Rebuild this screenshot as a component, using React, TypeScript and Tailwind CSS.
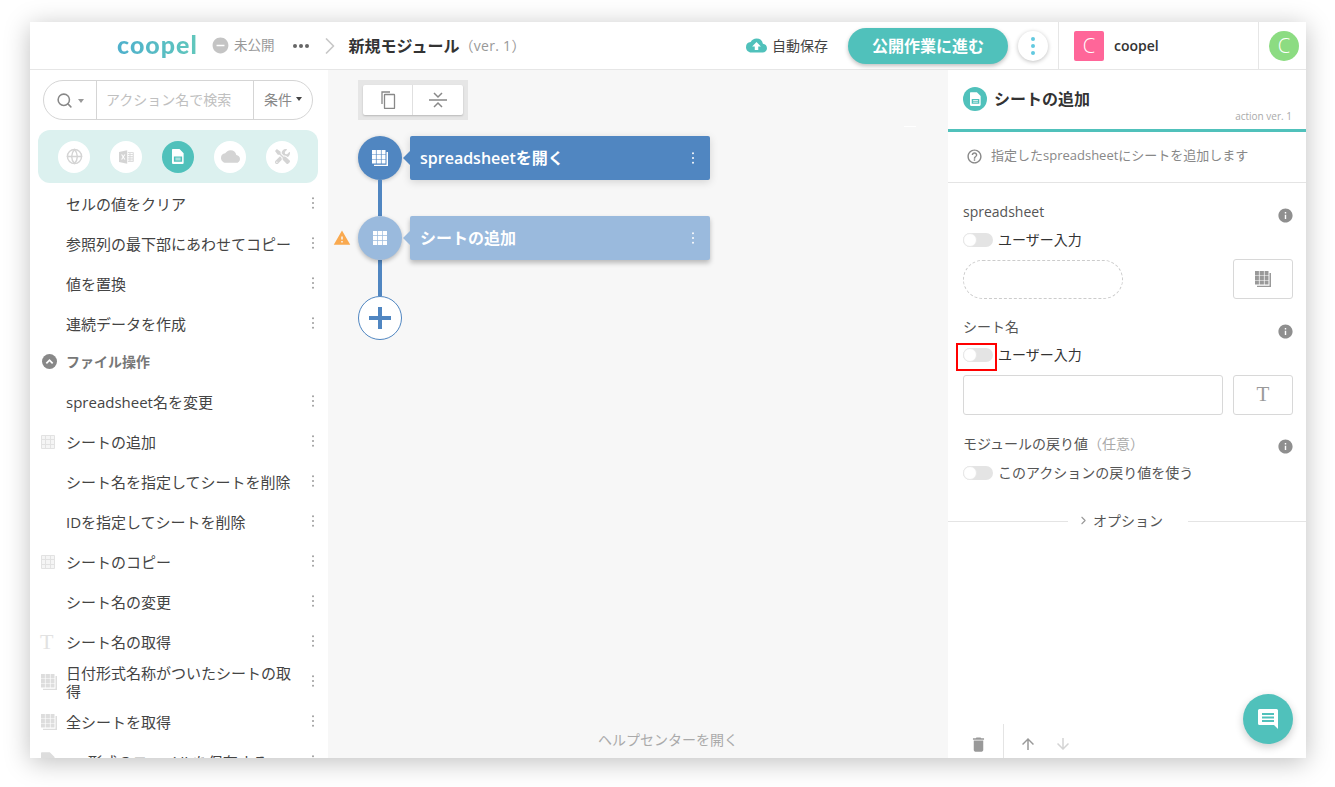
import { ChevronRight, Globe, Search } from "lucide-react";
import { FaTools } from "react-icons/fa";
import {
  MdArrowDownward,
  MdArrowUpward,
  MdCloud,
  MdCloudUpload,
  MdDelete,
  MdHelpOutline,
  MdInfo,
  MdRemoveCircle,
  MdWarning,
} from "react-icons/md";

function Grid({ className = "" }: { className?: string }) {
  return (
    <svg viewBox="0 0 14 14" className={className} fill="currentColor">
      <path d="M0 0h4.200v4.200H0zM4.900 0h4.200v4.200H4.900zM9.800 0H14v4.200H9.800zM0 4.900h4.200v4.200H0zM4.900 4.900h4.200v4.200H4.900zM9.800 4.900H14v4.200H9.800zM0 9.800h4.200V14H0zM4.900 9.800h4.200V14H4.900zM9.800 9.800H14V14H9.800z" />
    </svg>
  );
}

function ListGrid() {
  return (
    <svg viewBox="0 0 14 14" className="absolute left-[11px] top-[13px] h-[14px] w-[14px]" fill="#f5f5f5" stroke="#e2e2e2">
      <path d="M.5.500h13v13H.5zM4.500.500v13M9.500.500v13M.5 4.500h13M.5 9.500h13" />
    </svg>
  );
}

function GridStack({ className = "" }: { className?: string }) {
  return (
    <svg viewBox="0 0 16 16" className={className} fill="currentColor">
      <path d="M0 0h3.900v3.900H0zM4.600 0h4.300v3.900H4.600zM9.600 0h3.900v3.900H9.600zM0 4.600h3.900v4.300H0zM4.600 4.600h4.300v4.300H4.600zM9.600 4.600h3.900v4.300H9.600zM0 9.600h3.900v3.900H0zM4.600 9.600h4.300v3.900H4.600zM9.600 9.600h3.900v3.900H9.600z" />
      <path d="M14.500 2H16v14H2v-1.200h12.500z" />
    </svg>
  );
}

function SheetDoc({ className = "" }: { className?: string }) {
  return (
    <svg viewBox="0 0 16 20" className={className} fill="currentColor">
      <path
        fillRule="evenodd"
        d="M1 0h9l5.500 5.500V18.500a1.500 1.500 0 0 1-1.500 1.500H1.500A1.500 1.500 0 0 1 0 18.500V1a1 1 0 0 1 1-1zM2.500 10v7h11v-7zm2 1.500h7v1h-7zm0 2.500h7v1h-7z"
      />
    </svg>
  );
}

function ExcelIcon({ className = "" }: { className?: string }) {
  return (
    <svg viewBox="0 0 22 20" className={className} fill="currentColor">
      <path
        fillRule="evenodd"
        d="M0 2.500 12 0v20L0 17.500zM3 6.500l2.300 3.500L3 13.500h1.900L6.200 11.200l1.300 2.300h1.900L7.100 10l2.300-3.500H7.500L6.200 8.800 4.900 6.500z"
      />
      <path d="M13 3h8.500v14H13v-1.500h2.500v-2H13v-1.200h2.500v-2H13V9h2.500V7H13V5.800h2.500V4.300H13zm3.700 1.300v1.500h3.500V4.300zm0 2.700v2h3.500V7zm0 3.300v2h3.500v-2zm0 3.200v2h3.500v-2z" />
    </svg>
  );
}

function Dots({ className = "" }: { className?: string }) {
  return (
    <svg viewBox="0 0 4 14" className={className} fill="currentColor">
      <rect x="1" y="0.500" width="2" height="2" />
      <rect x="1" y="6" width="2" height="2" />
      <rect x="1" y="11.500" width="2" height="2" />
    </svg>
  );
}

function Toggle() {
  return (
    <span className="relative block h-[14px] w-[30px] shrink-0 rounded-full bg-[#e4e4e4]">
      <span className="absolute left-0 top-0 h-[14px] w-[14px] rounded-full border border-[#e8e8e8] bg-white" />
    </span>
  );
}

function Info() {
  return <MdInfo className="-mr-px text-[17px] text-[#8f8f8f]" />;
}

const listTop = ["セルの値をクリア", "参照列の最下部にあわせてコピー", "値を置換", "連続データを作成"];

type Row = { label: string; icon?: "grid" | "text" | "stack" | "doc" };

const listBottom: Row[] = [
  { label: "spreadsheet名を変更" },
  { label: "シートの追加", icon: "grid" },
  { label: "シート名を指定してシートを削除" },
  { label: "IDを指定してシートを削除" },
  { label: "シートのコピー", icon: "grid" },
  { label: "シート名の変更" },
  { label: "シート名の取得", icon: "text" },
  { label: "日付形式名称がついたシートの取得", icon: "stack" },
  { label: "全シートを取得", icon: "stack" },
  { label: "csv形式のファイルを保存する", icon: "doc" },
];

function ActionRow({ label, icon }: Row) {
  return (
    <div className="relative flex h-10 shrink-0 items-center pl-9 pr-[36px] text-[15px] leading-[18px] text-[#444]">
      {icon === "grid" && <ListGrid />}
      {icon === "stack" && <GridStack className="absolute left-[11px] top-[12px] h-[16px] w-[16px] text-[#dddddd]" />}
      {icon === "doc" && <SheetDoc className="absolute left-[11px] top-[10px] h-[18px] w-[14px] text-[#dddddd]" />}
      {icon === "text" && (
        <span className="absolute left-[10px] top-[8px] font-['Liberation_Serif',serif] text-[22px] leading-[24px] text-[#e2e2e2]">T</span>
      )}
      <span>{label}</span>
      <Dots className="absolute right-[13px] top-[13px] h-[12px] w-[4px] text-[#999]" />
    </div>
  );
}

function Sidebar() {
  return (
    <aside className="flex h-full w-[298px] shrink-0 flex-col overflow-hidden bg-white">
      <div className="ml-[13px] mt-[10px] flex h-10 w-[270px] shrink-0 items-center rounded-full border border-[#d5d5d5] text-[14px]">
        <div className="flex h-full w-[53px] items-center justify-center gap-[5px] border-r border-[#d5d5d5] text-[#888]">
          <Search size={17} strokeWidth={2.200} />
          <span className="mt-[1px] h-0 w-0 border-x-[3px] border-t-[4px] border-x-transparent border-t-[#999]" />
        </div>
        <div className="flex-1 pb-[2px] pl-[9px] text-[#c0c0c0]">アクション名で検索</div>
        <div className="flex h-full w-[59px] items-center justify-center gap-[4px] border-l border-[#d5d5d5] pb-[2px] text-[14px] text-[#888]">
          条件
          <span className="h-0 w-0 border-x-[3px] border-t-[4px] border-x-transparent border-t-[#444]" />
        </div>
      </div>
      <div className="ml-2 mt-[10px] flex h-[53px] w-[280px] shrink-0 items-center justify-between rounded-xl bg-[#dcf1ef] px-5">
        <span className="flex h-8 w-8 items-center justify-center rounded-full bg-white text-[#d4d4d4]">
          <Globe size={17} />
        </span>
        <span className="flex h-8 w-8 items-center justify-center rounded-full bg-white text-[#d4d4d4]">
          <ExcelIcon className="h-[14px] w-[15px]" />
        </span>
        <span className="flex h-8 w-8 items-center justify-center rounded-full bg-[#50c1bb] text-white">
          <SheetDoc className="h-[15px] w-[12px]" />
        </span>
        <span className="flex h-8 w-8 items-center justify-center rounded-full bg-white text-[#d4d4d4]">
          <MdCloud className="text-[19px]" />
        </span>
        <span className="flex h-8 w-8 items-center justify-center rounded-full bg-white text-[#d4d4d4]">
          <FaTools className="text-[15px]" />
        </span>
      </div>
      <div className="mt-px flex flex-col">
        {listTop.map((label) => (
          <ActionRow key={label} label={label} />
        ))}
        <div className="flex h-[38px] shrink-0 items-center gap-[9px] pb-1 pl-3 text-[14px] font-bold text-[#777]">
          <span className="flex h-[15px] w-[15px] items-center justify-center rounded-full bg-[#888]">
            <svg viewBox="0 0 10 10" className="h-[9px] w-[9px]" fill="none" stroke="white" strokeWidth="2">
              <path d="M1.500 7 5 3.500 8.500 7" />
            </svg>
          </span>
          ファイル操作
        </div>
        {listBottom.map((row) => (
          <ActionRow key={row.label} {...row} />
        ))}
      </div>
    </aside>
  );
}

function FlowCard({ label, light }: { label: string; light?: boolean }) {
  return (
    <div
      className={`relative flex h-11 w-[300px] items-center rounded-[2px] pl-[10px] text-[16px] font-semibold text-white ${
        light ? "bg-[#9abadd] shadow-[0_3px_5px_rgba(0,0,0,0.25)]" : "bg-[#5086c1] shadow-[0_2px_8px_rgba(0,0,0,0.15)]"
      }`}
    >
      <span
        className={`absolute left-[-7px] top-[15px] h-0 w-0 border-y-[7px] border-r-[7px] border-y-transparent ${
          light ? "border-r-[#9abadd]" : "border-r-[#5086c1]"
        }`}
      />
      {label}
      <Dots className="absolute right-[15px] top-[16px] h-[12px] w-[4px] text-white" />
    </div>
  );
}

function Canvas() {
  return (
    <main className="relative h-full flex-1 bg-[#f7f7f7] pl-[30px] pt-[10px]">
      <div className="flex h-10 w-[110px] items-center justify-center bg-[#e6e6e6]">
        <div className="flex h-[30px] w-[100px] rounded-[2px] bg-white shadow-[0_1px_2px_rgba(0,0,0,0.2)]">
          <div className="flex w-[50px] items-center justify-center border-r border-[#e0e0e0] text-[#888]">
            <svg viewBox="0 0 16 18" className="h-[18px] w-[16px]" fill="none" stroke="currentColor" strokeWidth="1.300">
              <path d="M2 13V1h8" />
              <rect x="4.500" y="3.500" width="10" height="14" rx="0.500" />
            </svg>
          </div>
          <div className="flex flex-1 items-center justify-center text-[#888]">
            <svg viewBox="0 0 18 16" className="h-[16px] w-[18px]" fill="none" stroke="currentColor" strokeWidth="1.500">
              <path d="M0 8h18M5 1 9 5l4-4M5 15l4-4 4 4" />
            </svg>
          </div>
        </div>
      </div>
      <div className="mt-4 flex flex-col">
        <div className="flex items-center gap-2">
          <span className="flex h-11 w-11 items-center justify-center rounded-full bg-[#5086c1] text-white shadow-[0_1px_4px_rgba(0,0,0,0.2)]">
            <GridStack className="h-[16px] w-[16px]" />
          </span>
          <FlowCard label="spreadsheetを開く" />
        </div>
        <div className="ml-5 h-9 w-1 bg-[#5086c1]" />
        <div className="relative flex items-center gap-2">
          <MdWarning className="absolute left-[-25px] top-[13px] text-[18px] text-[#f9a94f]" />
          <span className="flex h-11 w-11 items-center justify-center rounded-full bg-[#9abadd] text-white shadow-[0_2px_4px_rgba(0,0,0,0.25)]">
            <Grid className="h-[14px] w-[14px]" />
          </span>
          <FlowCard label="シートの追加" light />
        </div>
        <div className="ml-5 h-9 w-1 bg-[#5086c1]" />
        <span className="flex h-11 w-11 items-center justify-center rounded-full border border-[#5086c1] bg-white text-[#5086c1]">
          <svg viewBox="0 0 22 22" className="h-[22px] w-[22px]" fill="currentColor">
            <path d="M9 0h4v9h9v4h-9v9H9v-9H0V9h9z" />
          </svg>
        </span>
      </div>
      <span className="absolute left-[576px] top-[56px] h-px w-3 bg-white" />
      <div className="absolute bottom-[8px] left-[270px] text-[14px] text-[#aaa]">ヘルプセンターを開く</div>
    </main>
  );
}

function Panel() {
  return (
    <section className="relative flex h-full w-[358px] shrink-0 flex-col bg-white">
      <div className="relative h-[62px] shrink-0 border-b-[3px] border-[#50c1bb] pl-[15px] pt-[17px]">
        <div className="flex items-center gap-[7px]">
          <span className="flex h-6 w-6 items-center justify-center rounded-full bg-[#50c1bb] text-white">
            <SheetDoc className="h-[14px] w-[11px]" />
          </span>
          <span className="text-[16px] font-bold text-[#333]">シートの追加</span>
        </div>
        <span className="absolute bottom-[6px] right-[14px] text-[10px] leading-[14px] text-[#aaa]">action ver. 1</span>
      </div>
      <div className="flex h-[51px] shrink-0 items-center gap-[8px] border-b border-[#e4e4e4] pb-[2px] pl-[18px] text-[13px] text-[#888]">
        <MdHelpOutline className="text-[17px]" />
        指定したspreadsheetにシートを追加します
      </div>
      <div className="flex flex-col pl-[15px] pr-[13px] text-[14px] text-[#555]">
        <div className="mt-[20px] flex h-[20px] items-center justify-between">
          <span className="pb-[4px]">spreadsheet</span>
          <span className="mt-[5px]"><Info /></span>
        </div>
        <div className="mt-[8px] flex h-[18px] items-center gap-[5px] text-[14px] text-[#333]">
          <Toggle />
          <span className="pb-[2px]">ユーザー入力</span>
        </div>
        <div className="mt-[10px] flex items-start justify-between">
          <div className="mt-px h-[39px] w-[160px] rounded-full border border-dashed border-[#ccc]" />
          <div className="flex h-10 w-[60px] items-center justify-center rounded-[3px] border border-[#d8d8d8] text-[#999]">
            <GridStack className="h-[16px] w-[16px]" />
          </div>
        </div>
        <div className="mt-[18px] flex h-[20px] items-center justify-between">
          <span className="pb-[2px]">シート名</span>
          <span className="mt-[8px]"><Info /></span>
        </div>
        <div className="relative mt-[9px] flex h-[18px] items-center gap-[5px] text-[14px] text-[#333]">
          <Toggle />
          <span className="pb-[1px]">ユーザー入力</span>
          <span className="absolute left-[-7px] top-[-3px] h-7 w-[41px] border-2 border-[#f00]" />
        </div>
        <div className="mt-[11px] flex justify-between">
          <div className="h-10 w-[260px] rounded-[3px] border border-[#d8d8d8]" />
          <div className="flex h-10 w-[60px] items-center justify-center rounded-[3px] border border-[#d8d8d8] font-['Liberation_Serif',serif] text-[21px] text-[#999]">
            T
          </div>
        </div>
        <div className="mt-[19px] flex h-[20px] items-center justify-between">
          <span className="pb-[2px]">
            モジュールの戻り値<span className="text-[#aaa]">（任意）</span>
          </span>
          <span className="mt-[5px]"><Info /></span>
        </div>
        <div className="mt-[10px] flex h-[18px] items-center gap-[5px] text-[14px] text-[#555]">
          <Toggle />
          <span className="pb-[2px]">このアクションの戻り値を使う</span>
        </div>
      </div>
      <div className="mt-[28px] flex items-center">
        <div className="h-px w-[120px] bg-[#e4e4e4]" />
        <div className="flex w-[120px] items-center gap-[3px] pb-[2px] pl-[9px] text-[14px] text-[#555]">
          <ChevronRight size={13} className="text-[#999]" />
          オプション
        </div>
        <div className="h-px flex-1 bg-[#e4e4e4]" />
      </div>
      <div className="mt-auto flex h-[34px] items-end">
        <div className="flex h-full w-[56px] items-center justify-center border-r border-[#e4e4e4] pl-[5px] pt-[6px] text-[#999]">
          <MdDelete className="text-[19px]" />
        </div>
        <div className="flex h-full items-center gap-[17px] pl-[15px] pt-[6px]">
          <MdArrowUpward className="text-[18px] text-[#999]" />
          <MdArrowDownward className="text-[18px] text-[#d4d4d4]" />
        </div>
      </div>
      <span className="absolute bottom-[14px] right-[13px] flex h-[50px] w-[50px] items-center justify-center rounded-full bg-[#50c1bb] shadow-[0_3px_8px_rgba(0,0,0,0.2)]">
        <svg viewBox="0 0 20 20" className="h-[20px] w-[20px]">
          <path fill="white" d="M1.500 0h17A1.500 1.500 0 0 1 20 1.500V20l-4-4H1.500A1.500 1.500 0 0 1 0 14.500v-13A1.500 1.500 0 0 1 1.500 0z" />
          <path fill="#50c1bb" d="M4 4h12v2H4zM4 7.500h12v2H4zM4 11h12v2H4z" />
        </svg>
      </span>
    </section>
  );
}

function Header() {
  return (
    <header className="flex h-12 shrink-0 items-center border-b border-[#e6e6e6] bg-white">
      <div className="ml-[87px] w-[84px] bg-gradient-to-r from-[#4fb0cc] to-[#62c8bb] bg-clip-text pb-[4px] font-['Lato',sans-serif] text-[25px] font-black leading-[24px] tracking-[1px] text-transparent">
        coopel
      </div>
      <div className="ml-[10px] flex items-center gap-[4px] text-[13.500px] text-[#999]">
        <MdRemoveCircle className="text-[19px] text-[#c4c4c4]" />
        未公開
      </div>
      <div className="ml-[18px] flex items-center gap-[2px]">
        <span className="h-1 w-1 rounded-full bg-[#666]" />
        <span className="h-1 w-1 rounded-full bg-[#666]" />
        <span className="h-1 w-1 rounded-full bg-[#666]" />
      </div>
      <ChevronRight size={28} className="ml-[7px] text-[#c8c8c8]" strokeWidth={1.500} />
      <div className="ml-[5px] text-[16px] font-bold text-[#333]">新規モジュール</div>
      <div className="text-[14px] tracking-[0.3px] text-[#999]">（ver. 1）</div>
      <div className="ml-auto flex items-center gap-[5px] text-[14px] text-[#444]">
        <MdCloudUpload className="text-[21px] text-[#50c1bb]" />
        自動保存
      </div>
      <button className="ml-[20px] h-9 w-[160px] rounded-full bg-[#50c1bb] text-[16px] font-bold text-white shadow-[0_2px_4px_rgba(0,0,0,0.25)]">
        公開作業に進む
      </button>
      <span className="ml-[10px] flex h-[30px] w-[30px] items-center justify-center rounded-full bg-white text-[#62c9e0] shadow-[0_1px_4px_rgba(0,0,0,0.25)]">
        <svg viewBox="0 0 4 18" className="h-[18px] w-[4px]" fill="currentColor">
          <circle cx="2" cy="2" r="2" />
          <circle cx="2" cy="9" r="2" />
          <circle cx="2" cy="16" r="2" />
        </svg>
      </span>
      <div className="ml-[10px] flex h-full w-[200px] items-center border-l border-[#e6e6e6] pl-[15px]">
        <span className="flex h-[30px] w-[30px] items-center justify-center rounded-[2px] bg-[#ff6699] text-[20px] font-light text-white">C</span>
        <span className="ml-[10px] text-[14px] font-semibold text-[#333]">coopel</span>
      </div>
      <div className="flex h-full w-[48px] items-center border-l border-[#e6e6e6] pl-[10px]">
        <span className="flex h-[30px] w-[30px] items-center justify-center rounded-full bg-[#8cdc82] text-[20px] font-light text-white">C</span>
      </div>
    </header>
  );
}

export default function App() {
  return (
    <div className="h-[787px] w-[1335px] overflow-hidden bg-white pl-[30px] pt-[22px] font-['Open_Sans','Noto_Sans_CJK_JP',sans-serif]">
      <div className="flex h-[736px] w-[1276px] flex-col overflow-hidden bg-white shadow-[0_4px_24px_rgba(0,0,0,0.25)]">
        <Header />
        <div className="flex min-h-0 flex-1">
          <Sidebar />
          <Canvas />
          <Panel />
        </div>
      </div>
    </div>
  );
}
